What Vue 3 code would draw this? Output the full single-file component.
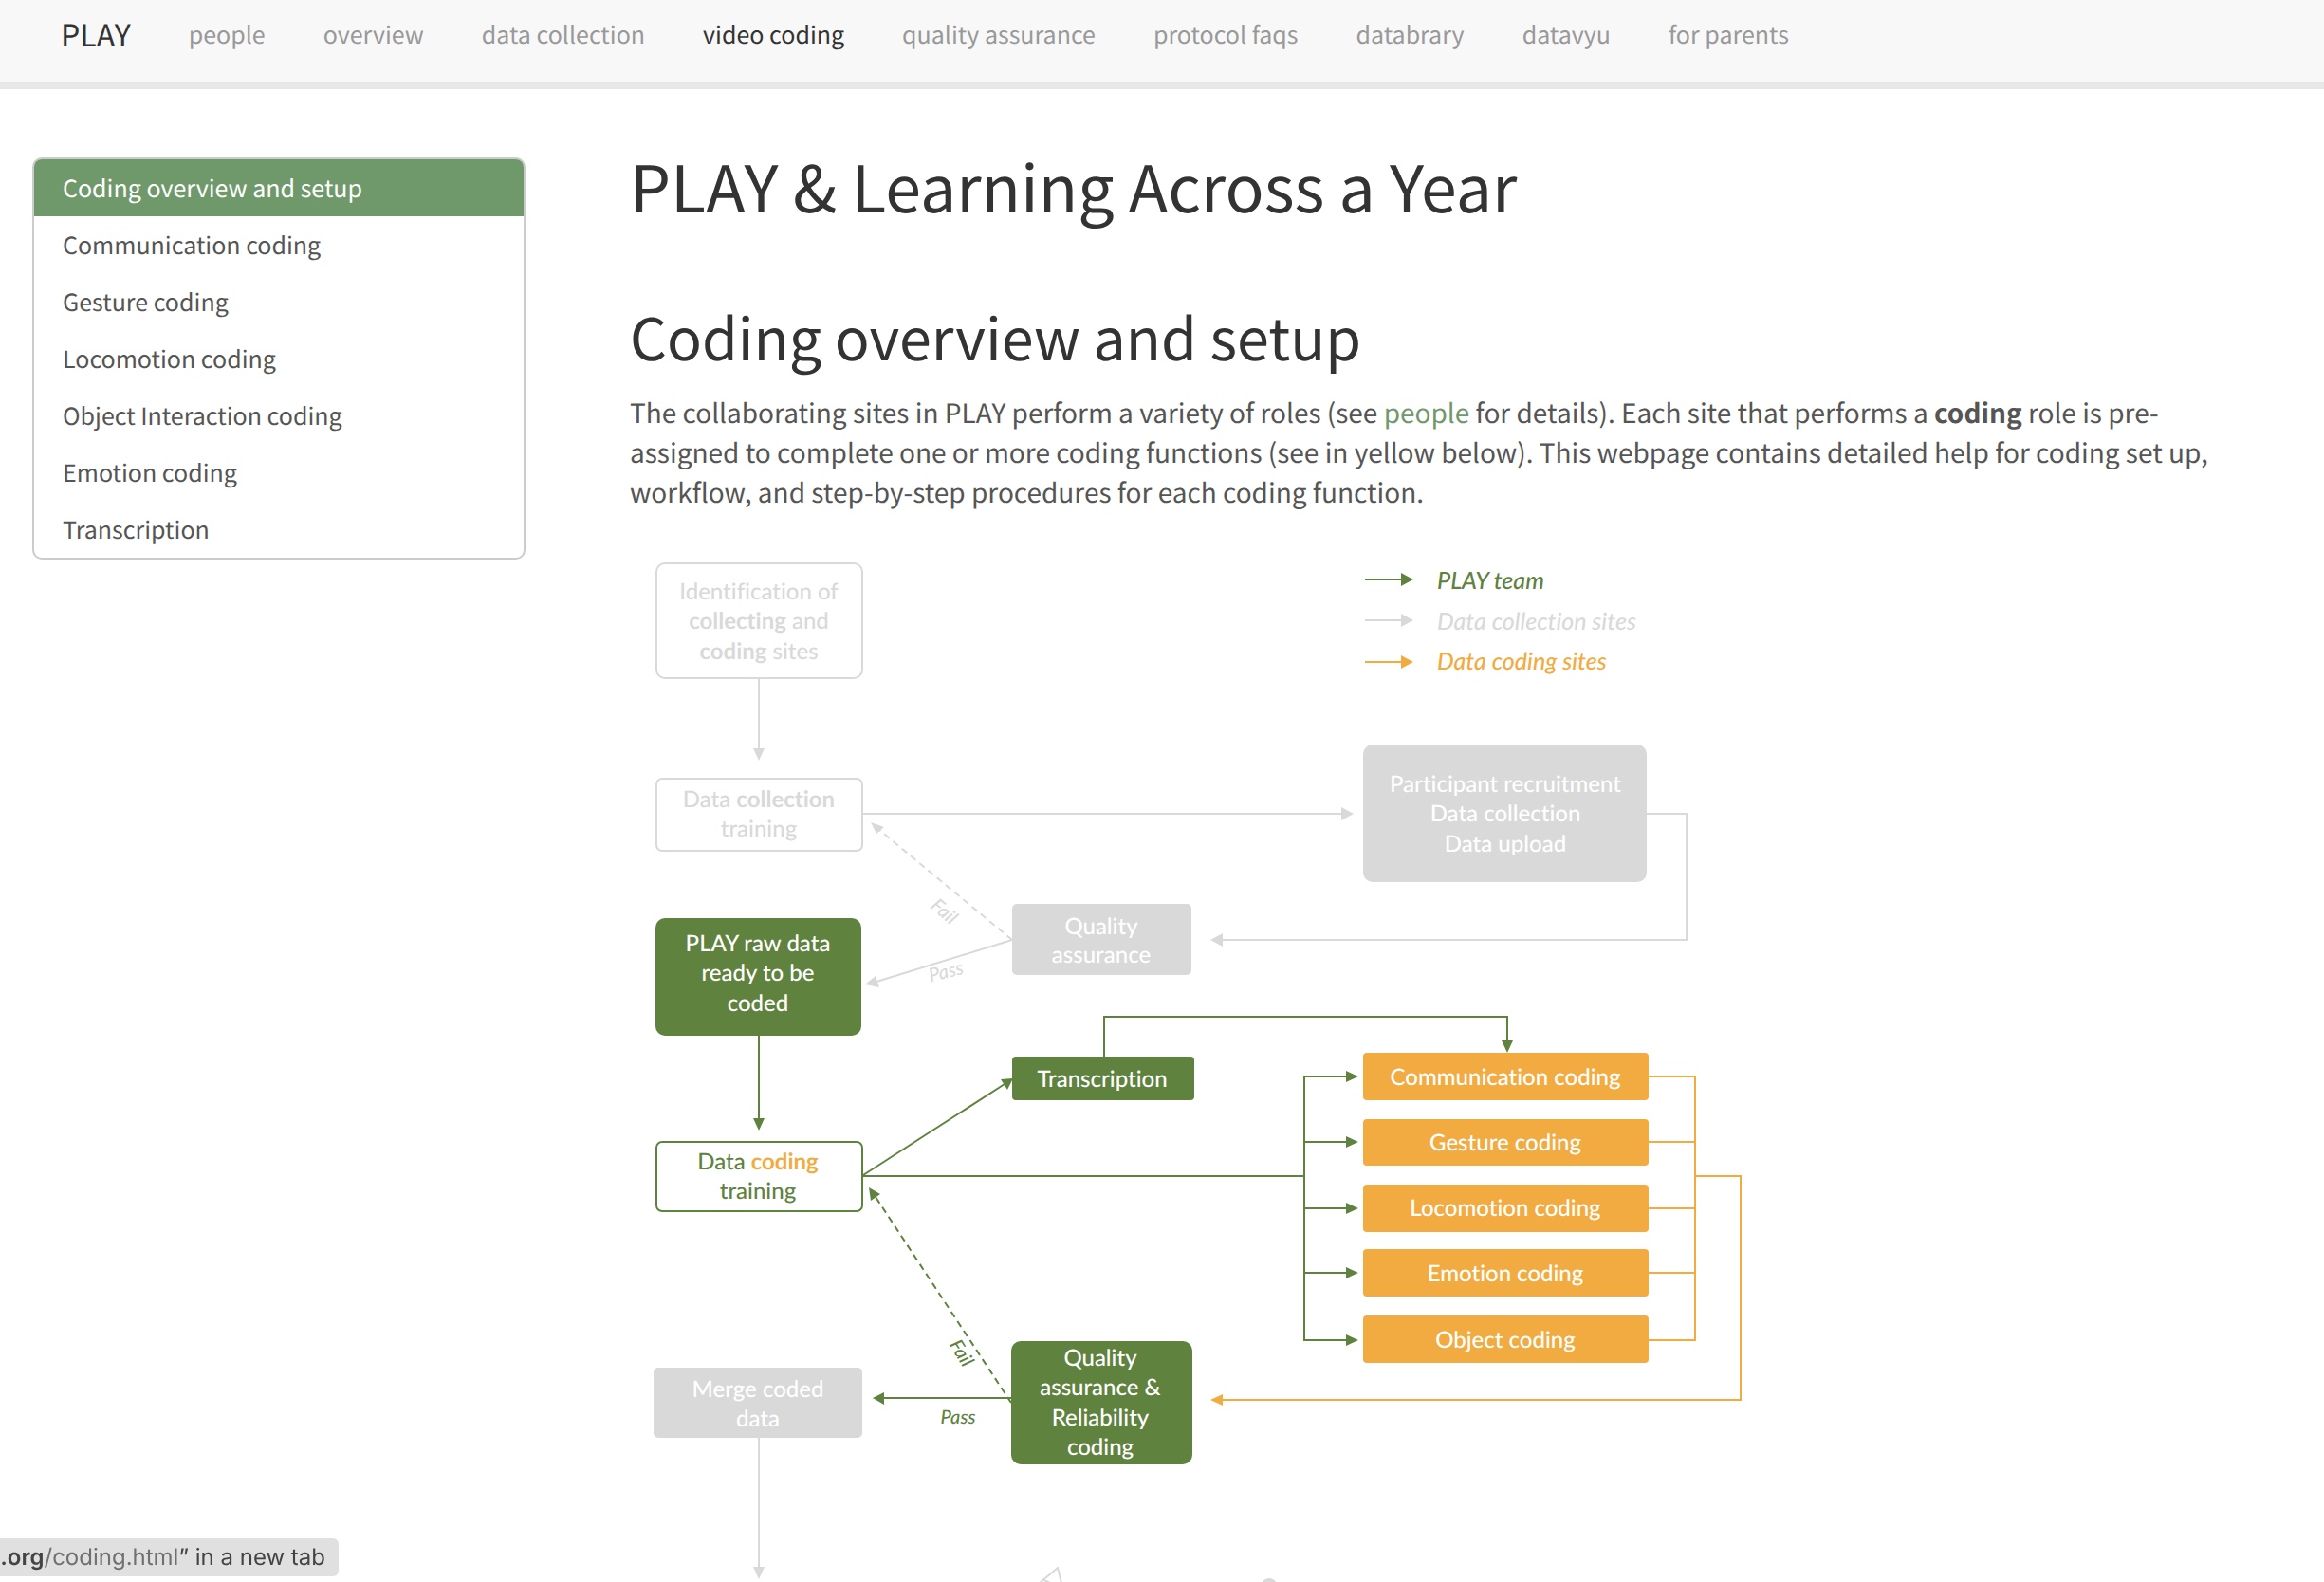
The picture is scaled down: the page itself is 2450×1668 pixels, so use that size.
<script setup>
const navLinks = [
  'people', 'overview', 'data collection', 'video coding', 'quality assurance',
  'protocol faqs', 'databrary', 'datavyu', 'for parents',
]
const currentNav = 'video coding'

const sections = [
  'Coding overview and setup', 'Communication coding', 'Gesture coding', 'Locomotion coding',
  'Object Interaction coding', 'Emotion coding', 'Transcription',
]
const currentSection = 'Coding overview and setup'

// A text run is [text, class?]; a node line is a list of runs with its baseline.
const line = (y, ...runs) => ({ y, runs })

const nodes = [
  { kind: 'gray-outline', x: 692, y: 594, w: 217, h: 121, r: 9, cx: 800, lines: [
    line(632, ['Identification of']), line(663, ['collecting', 'strong'], [' and']), line(695, ['coding', 'strong'], [' sites'])] },
  { kind: 'gray-outline', x: 692, y: 821, w: 217, h: 76, r: 6, cx: 800, lines: [
    line(851, ['Data '], ['collection', 'strong']), line(882, ['training'])] },
  { kind: 'gray', x: 1437, y: 785, w: 299, h: 145, r: 10, cx: 1587, lines: [
    line(835, ['Participant recruitment']), line(866, ['Data collection']), line(898, ['Data upload'])] },
  { kind: 'gray', x: 1067, y: 953, w: 189, h: 75, r: 5, cx: 1161, lines: [
    line(985, ['Quality']), line(1015, ['assurance'])] },
  { kind: 'green', x: 691, y: 968, w: 217, h: 124, r: 10, cx: 799, lines: [
    line(1003, ['PLAY raw data']), line(1034, ['ready to be']), line(1066, ['coded'])] },
  { kind: 'green', x: 1067, y: 1114, w: 192, h: 46, r: 4, cx: 1162, lines: [line(1146, ['Transcription'])] },
  { kind: 'green-outline', x: 692, y: 1204, w: 217, h: 73, r: 6, cx: 799, lines: [
    line(1233, ['Data '], ['coding', 'strong amber']), line(1264, ['training'])] },
  { kind: 'orange', x: 1437, y: 1110, w: 301, h: 50, r: 4, cx: 1587, lines: [line(1144, ['Communication coding'])] },
  { kind: 'orange', x: 1437, y: 1180, w: 301, h: 49, r: 4, cx: 1587, lines: [line(1213, ['Gesture coding'])] },
  { kind: 'orange', x: 1437, y: 1249, w: 301, h: 50, r: 4, cx: 1587, lines: [line(1282, ['Locomotion coding'])] },
  { kind: 'orange', x: 1437, y: 1317, w: 301, h: 50, r: 4, cx: 1587, lines: [line(1351, ['Emotion coding'])] },
  { kind: 'orange', x: 1437, y: 1387, w: 301, h: 50, r: 4, cx: 1587, lines: [line(1421, ['Object coding'])] },
  { kind: 'gray', x: 689, y: 1442, w: 220, h: 74, r: 5, cx: 799, lines: [
    line(1473, ['Merge coded']), line(1504, ['data'])] },
  { kind: 'green', x: 1066, y: 1414, w: 191, h: 130, r: 10, cx: 1160, lines: [
    line(1440, ['Quality']), line(1471, ['assurance &']), line(1503, ['Reliability']), line(1534, ['coding'])] },
]

const connectors = [
  { color: 'gray', d: 'M800 716V790', head: '800,802 794,789 806,789' },
  { color: 'gray', d: 'M910 858H1415', head: '1427,858 1414,851 1414,865' },
  { color: 'gray', d: 'M1736 858H1778V991H1288', head: '1276,991 1289,984 1289,998' },
  { color: 'gray', d: 'M1067 991L924 1035', head: '912,1038 923,1029 927,1041' },
  { color: 'gray', dashed: true, d: 'M1067 991L927 875', head: '918,867 932,872 924,879' },
  { color: 'green', d: 'M800 1092V1180', head: '800,1192 794,1179 806,1179' },
  { color: 'green', d: 'M1164 1114V1072H1589V1098', head: '1589,1110 1583,1097 1595,1097' },
  { color: 'green', d: 'M910 1239L1059 1143', head: '1068,1137 1055,1138 1062,1149' },
  { color: 'green', d: 'M910 1240H1375' },
  { color: 'green', d: 'M1420 1135H1375V1413H1420', head: '1432,1135 1419,1129 1419,1141' },
  { color: 'green', d: 'M1375 1204H1420', head: '1432,1204 1419,1198 1419,1210' },
  { color: 'green', d: 'M1375 1274H1420', head: '1432,1274 1419,1268 1419,1280' },
  { color: 'green', d: 'M1375 1342H1420', head: '1432,1342 1419,1336 1419,1348' },
  { color: 'green', head: '1432,1413 1419,1407 1419,1419' },
  { color: 'orange', d: 'M1738 1135H1787V1413H1738' },
  { color: 'orange', d: 'M1738 1204H1787M1738 1274H1787M1738 1342H1787' },
  { color: 'orange', d: 'M1787 1240H1835V1476H1288', head: '1276,1476 1289,1470 1289,1482' },
  { color: 'green', dashed: true, d: 'M1066 1479L923 1262', head: '916,1252 928,1259 918,1266' },
  { color: 'green', d: 'M1066 1474H931', head: '920,1474 932,1468 932,1481' },
  { color: 'gray', d: 'M800 1516V1653', head: '800,1665 794,1652 806,1652' },
  { color: 'green', d: 'M1439 611H1478', head: '1490,611 1477,604 1477,618' },
  { color: 'gray', d: 'M1439 654H1478', head: '1490,654 1477,647 1477,661' },
  { color: 'orange', d: 'M1439 698H1478', head: '1490,698 1477,691 1477,705' },
]

const legend = [
  { color: 'green', y: 621, text: 'PLAY team' },
  { color: 'gray', y: 664, text: 'Data collection sites' },
  { color: 'orange', y: 706, text: 'Data coding sites' },
]

const edgeLabels = [
  { color: 'gray', x: 991, y: 966, turn: 41, text: 'Fail' },
  { color: 'gray', x: 999, y: 1031, turn: -14, text: 'Pass' },
  { color: 'green', x: 1008, y: 1430, turn: 58, text: 'Fail' },
  { color: 'green', x: 1010, y: 1501, turn: 0, text: 'Pass' },
]
</script>

<template>
  <div class="page">
    <header class="topbar">
      <a class="brand" href="#">PLAY</a>
      <nav class="nav">
        <a v-for="name in navLinks" :key="name" href="#" class="nav-link" :class="{ current: name === currentNav }">{{ name }}</a>
      </nav>
    </header>

    <div class="body">
      <nav class="toc">
        <a v-for="name in sections" :key="name" href="#" class="toc-link" :class="{ current: name === currentSection }">{{ name }}</a>
      </nav>

      <main class="content">
        <h1>PLAY &amp; Learning Across a Year</h1>
        <h2>Coding overview and setup</h2>
        <p>
          The collaborating sites in PLAY perform a variety of roles (see <a href="#">people</a> for details).
          Each site that performs a <strong>coding</strong> role is pre-assigned to complete one or more coding
          functions (see in yellow below). This webpage contains detailed help for coding set up, workflow, and
          step-by-step procedures for each coding function.
        </p>

        <svg class="diagram" width="1200" height="1088" viewBox="664 580 1200 1088" role="img" aria-label="Coding workflow">
          <g v-for="(c, i) in connectors" :key="'c' + i" :class="['edge', c.color]">
            <path v-if="c.d" :d="c.d" :class="{ dashed: c.dashed }" />
            <polygon v-if="c.head" :points="c.head" />
          </g>

          <g v-for="(n, i) in nodes" :key="'n' + i" :class="['node', n.kind]">
            <rect :x="n.x" :y="n.y" :width="n.w" :height="n.h" :rx="n.r" />
            <text v-for="l in n.lines" :key="l.y" :x="n.cx" :y="l.y"><tspan v-for="(run, k) in l.runs" :key="k" :class="run[1]">{{ run[0] }}</tspan></text>
          </g>

          <text v-for="l in legend" :key="l.text" x="1515" :y="l.y" :class="['legend', l.color]">{{ l.text }}</text>
          <text
            v-for="(l, i) in edgeLabels" :key="'l' + i" :x="l.x" :y="l.y"
            :transform="`rotate(${l.turn} ${l.x} ${l.y})`" :class="['edge-label', l.color]"
          >{{ l.text }}</text>

          <g class="figure">
            <path d="M1096 1669L1115 1653L1119 1669M1099 1665L1107 1669" />
            <circle cx="1338" cy="1672" r="8" />
          </g>
        </svg>
      </main>
    </div>

    <div class="status"><b>t.org</b><span class="path">/coding.html</span>” in a new tab</div>
  </div>
</template>

<style>
body {
  margin: 0;
  background: #fff;
}
</style>

<style scoped>
.page {
  font-family: "Noto Sans CJK SC", "Noto Sans", sans-serif;
  color: #555;
  text-rendering: geometricPrecision;
  overflow: hidden;
}

a {
  text-decoration: none;
}

.topbar {
  display: flex;
  align-items: center;
  gap: 61px;
  padding: 16px 64px 30px;
  line-height: 40px;
  background: #f8f8f8;
  border-bottom: 8px solid #e7e7e7;
}

.brand {
  font-size: 32px;
  color: #333;
}

.nav {
  display: flex;
  gap: 61px;
  font-size: 25px;
}

.nav-link {
  color: #999;
  white-space: nowrap;
}

.nav-link.current {
  color: #333;
}

.body {
  display: flex;
  align-items: flex-start;
  gap: 110px;
  padding: 51px 106px 0 34px;
}

.toc {
  flex: none;
  box-sizing: border-box;
  width: 520px;
  margin-top: 21px;
  border: 2px solid #ccc;
  border-radius: 10px;
  overflow: hidden;
}

.toc-link {
  display: block;
  padding: 0 30px;
  font-size: 25px;
  line-height: 60px;
  color: #555;
}

.toc-link.current {
  background: #70996b;
  color: #fff;
}

.content {
  flex: 1;
  min-width: 0;
}

h1,
h2 {
  margin: 0;
  font-weight: 400;
  color: #333;
}

h1 {
  font-size: 68px;
  line-height: 100px;
}

h2 {
  margin-top: 65px;
  font-size: 61px;
  line-height: 88px;
}

p {
  margin: 16px 0 40px;
  font-size: 28px;
  line-height: 42px;
}

p a {
  color: #70996b;
}

.diagram {
  display: block;
  font-family: Lato, "Noto Sans", sans-serif;
  font-size: 24px;
  font-weight: 500;
  font-variant-ligatures: none;
}

.edge path {
  fill: none;
  stroke-width: 2px;
}

.edge .dashed {
  stroke-dasharray: 7 5;
}

.edge.gray path { stroke: #d9d9d9; }
.edge.green path { stroke: #5f823f; }
.edge.orange path { stroke: #f2ab41; }

.gray { fill: #d9d9d9; }
.green { fill: #5f823f; }
.orange { fill: #f2ab41; }

.node text {
  text-anchor: middle;
  fill: #fff;
  white-space: pre;
}

.gray-outline rect {
  fill: #fff;
  stroke: #d9d9d9;
  stroke-width: 2px;
}

.node.gray-outline text {
  fill: #d9d9d9;
}

.green-outline rect {
  fill: #fff;
  stroke: #5f823f;
  stroke-width: 2px;
}

.node.green-outline text {
  fill: #5f823f;
}

.strong {
  font-weight: 700;
}

.amber {
  fill: #f2ab41;
}

.legend {
  font-size: 25px;
  font-style: italic;
}

.edge-label {
  font-size: 20px;
  font-style: italic;
  text-anchor: middle;
}

.figure path {
  fill: none;
  stroke: #d9d9d9;
  stroke-width: 2px;
}

.figure circle {
  fill: #d9d9d9;
}

.status {
  position: fixed;
  left: 0;
  bottom: 6px;
  display: flex;
  justify-content: flex-end;
  box-sizing: border-box;
  width: 357px;
  padding-right: 14px;
  overflow: hidden;
  border-radius: 0 6px 6px 0;
  background: #e0e0e0;
  font-family: Inter, sans-serif;
  font-size: 24px;
  line-height: 40px;
  color: #444;
  white-space: pre;
}

.status b {
  font-weight: 600;
}

.path {
  color: #707070;
}
</style>
